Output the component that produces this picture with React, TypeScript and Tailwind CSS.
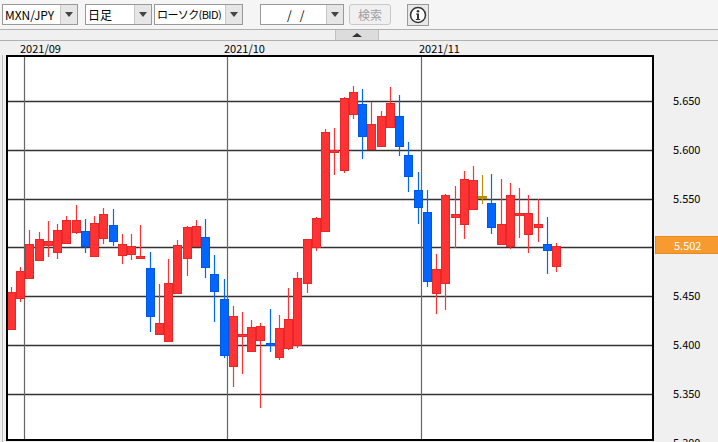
const C: [string, number, number, number, number][] = [
  // color, wickTop, wickBot, bodyTop, bodyBot (page px)
  ["r", 287, 329, 292, 329], ["r", 267, 302, 271, 298], ["r", 230, 279, 244, 278], ["r", 232, 260, 239, 260],
  ["r", 221, 257, 241, 245], ["r", 224, 259, 230, 252], ["r", 216, 243, 220, 243], ["r", 205, 234, 220, 232],
  ["b", 219, 253, 231, 246], ["r", 216, 257, 223, 256], ["r", 208, 244, 214, 238], ["b", 209, 246, 225, 241],
  ["r", 234, 264, 244, 255], ["r", 234, 260, 246, 254], ["r", 225, 258, 256, 258], ["b", 252, 332, 268, 316],
  ["r", 284, 334, 323, 334], ["r", 259, 341, 283, 341], ["r", 240, 293, 245, 293], ["r", 226, 276, 227, 258],
  ["r", 220, 246, 226, 246], ["b", 219, 278, 237, 267], ["b", 255, 322, 274, 291], ["b", 279, 358, 299, 355],
  ["r", 306, 387, 316, 366], ["r", 312, 374, 334, 336], ["r", 320, 351, 327, 351], ["r", 323, 408, 326, 340],
  ["b", 309, 352, 343, 345], ["r", 315, 360, 328, 357], ["r", 288, 350, 319, 348], ["r", 272, 348, 278, 345],
  ["r", 239, 293, 239, 283], ["r", 217, 251, 218, 247], ["r", 129, 232, 132, 231], ["r", 128, 175, 150, 152],
  ["r", 97, 173, 98, 170], ["r", 86, 119, 92, 114], ["b", 89, 159, 104, 136], ["r", 102, 150, 124, 149],
  ["r", 111, 147, 116, 146], ["r", 87, 128, 103, 127], ["b", 95, 156, 116, 146], ["b", 142, 192, 155, 176],
  ["b", 172, 224, 190, 207], ["b", 190, 287, 212, 281], ["r", 254, 314, 269, 293], ["r", 194, 310, 195, 283],
  ["r", 186, 248, 214, 217], ["r", 171, 239, 179, 224], ["r", 166, 209, 180, 209], ["g", 175, 204, 196, 197],
  ["b", 174, 234, 203, 227], ["r", 179, 245, 224, 244], ["r", 183, 249, 195, 246], ["r", 188, 238, 213, 215],
  ["r", 195, 253, 213, 234], ["r", 199, 242, 224, 227], ["b", 217, 274, 244, 250], ["r", 243, 272, 246, 266],
];

const fill: Record<string, string> = { r: "#ff3333", b: "#0066ff", g: "#b8900a" };
const edge: Record<string, string> = { r: "#e62828", b: "#0058e0", g: "#b8900a" };

const gridY = [101, 150, 199, 247, 296, 345, 394];
const labels = ["5.650", "5.600", "5.550", "", "5.450", "5.400", "5.350"];

function Arrow() {
  return (
    <div className="flex h-full w-[17px] shrink-0 items-center justify-center border-l border-[#c8c8c8] bg-[#e6e6e6]">
      <div className="h-0 w-0 border-x-[4px] border-t-[5px] border-x-transparent border-t-[#444]" />
    </div>
  );
}

export default function App() {
  return (
    <div className="relative h-[442px] w-[718px] overflow-hidden bg-[#f0f0f0] text-[12px] text-black" style={{ fontFamily: '"Noto Sans CJK JP", "DejaVu Sans", sans-serif' }}>
      {/* toolbar */}
      <div className="flex h-[30px] items-center border-b border-[#b0b0b0] bg-[#f5f5f5] pl-[2px]">
        <div className="flex h-[21px] w-[76px] items-center border border-[#999] bg-white">
          <span className="flex-1 whitespace-nowrap pl-[2px] leading-none">MXN/JPY</span>
          <Arrow />
        </div>
        <div className="ml-[7px] flex h-[21px] w-[67px] items-center border border-[#999] bg-white">
          <span className="flex-1 pl-[2px] leading-none">日足</span>
          <Arrow />
        </div>
        <div className="ml-[2px] flex h-[21px] w-[89px] items-center border border-[#999] bg-white">
          <span className="flex-1 overflow-hidden whitespace-nowrap pl-[2px] text-[11px] leading-none tracking-[-0.6px]">ローソク(BID)</span>
          <Arrow />
        </div>
        <div className="ml-[17px] flex h-[21px] w-[84px] items-center border border-[#999] bg-white">
          <span className="flex-1 whitespace-nowrap pl-[26px] leading-none">/&nbsp;&nbsp;&nbsp;/</span>
          <Arrow />
        </div>
        <div className="ml-[5px] flex h-[21px] w-[42px] items-center justify-center rounded-[3px] border border-[#c8c8c8] bg-[#f0f0f0] text-[#a0a0a0]">検索</div>
        <div className="ml-[16px] flex h-[22px] w-[22px] items-center justify-center border border-[#999] bg-[#e8e8e8]">
          <svg width="18" height="18" viewBox="0 0 18 18">
            <circle cx="9" cy="9" r="7.5" fill="white" stroke="#333" strokeWidth="1.5" />
            <circle cx="9" cy="5.2" r="1.3" fill="#333" />
            <path d="M7 7.5h3v5.5h1.2v1H6.8v-1H8V8.5H7z" fill="#333" />
          </svg>
        </div>
      </div>
      {/* scroll toggle row */}
      <div className="flex h-[11px] justify-center border-b border-[#b0b0b0] bg-[#f0f0f0]">
        <div className="ml-[-5px] flex h-[10px] w-[44px] items-center justify-center border-x border-[#c0c0c0] bg-[#dcdcdc]">
          <div className="h-0 w-0 border-x-[5px] border-b-[4px] border-x-transparent border-b-[#333]" />
        </div>
      </div>
      {/* date labels */}
      <div className="relative h-[14px] text-[11px] leading-[14px]">
        <span className="absolute left-[20px] top-[0px]">2021/09</span>
        <span className="absolute left-[224px] top-[0px]">2021/10</span>
        <span className="absolute left-[419px] top-[0px]">2021/11</span>
      </div>
      {/* chart */}
      <div className="flex">
        <div className="ml-[2px] h-[388px] w-[1px] bg-[#bdbdbd]" />
        <div className="ml-[3px] h-[386px] w-[648px] border-2 border-black bg-white">
          <svg width="644" height="382" viewBox="7 57 644 382">
            {gridY.map((y) => (
              <line key={y} x1="7" x2="652" y1={y + 0.5} y2={y + 0.5} stroke="#333" strokeWidth="1.5" />
            ))}
            {[23, 226, 420].map((x) => (
              <line key={x} x1={x + 0.5} x2={x + 0.5} y1="56" y2="440" stroke="#666" strokeWidth="1.2" />
            ))}
            {C.map(([c, wt, wb, bt, bb], i) => {
              const cx = Math.round(10 + i * 9.24);
              const h = Math.max(bb - bt, 2);
              return (
                <g key={i}>
                  <line x1={cx + 0.5} x2={cx + 0.5} y1={wt} y2={wb} stroke={fill[c]} strokeWidth="1.2" />
                  <rect x={cx - 3.5} y={bt + 0.5} width="8" height={h} fill={fill[c]} stroke={edge[c]} strokeWidth="1" />
                </g>
              );
            })}
          </svg>
        </div>
        <div className="relative flex-1 text-[11px]">
          {gridY.map((y, i) =>
            labels[i] ? (
              <span key={y} className="absolute left-[19px] leading-[12px]" style={{ top: y - 62 }}>
                {labels[i]}
              </span>
            ) : null
          )}
          <span className="absolute left-[19px] top-[381px] leading-[12px]">5.300</span>
          <div className="absolute left-[1px] top-[181px] flex h-[18px] w-[65px] items-center border border-[#e88a1a] bg-[#f79a30] pl-[18px] leading-none text-white">
            5.502
          </div>
        </div>
      </div>
    </div>
  );
}
